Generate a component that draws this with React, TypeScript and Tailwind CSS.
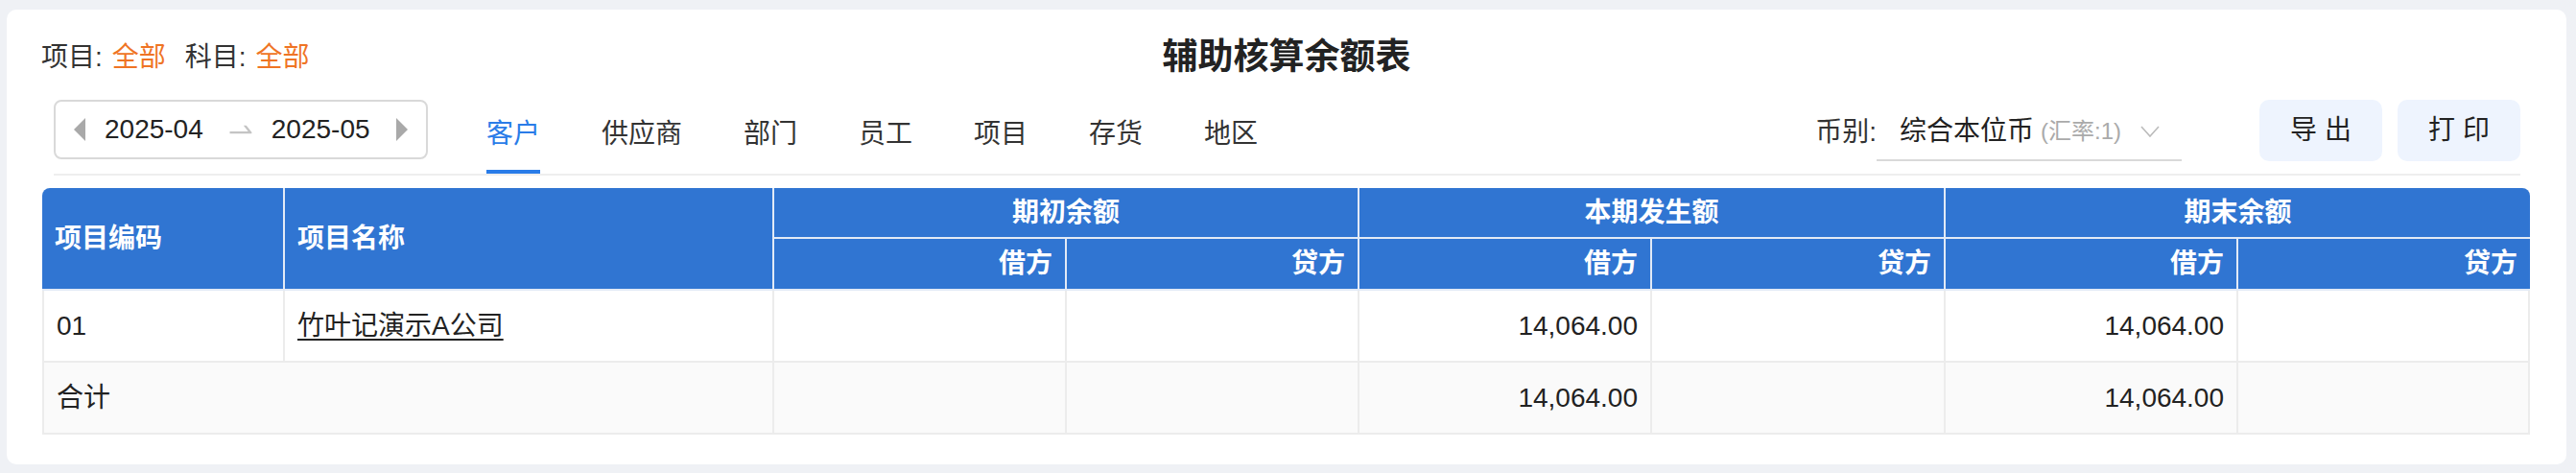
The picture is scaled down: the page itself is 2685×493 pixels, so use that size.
import React from "react";

const font = "font-['Liberation_Sans','Noto_Sans_CJK_SC',sans-serif]";

const tabs = ["客户", "供应商", "部门", "员工", "项目", "存货", "地区"];

// 表体数据
const rows = [
    { code: "01", name: "竹叶记演示A公司", values: ["", "", "14,064.00", "", "14,064.00", ""] },
];
const total = ["", "", "14,064.00", "", "14,064.00", ""];

function DateRange() {
    return (
        <div className="flex items-center h-[62px] w-[390px] border-2 border-[#d9d9d9] rounded-[8px] pl-[19px]">
            <svg width="12" height="24" viewBox="0 0 12 24">
                <polygon points="12,0 0,12 12,24" fill="#a9a9a9" />
            </svg>
            <span className="ml-[20px] text-[28px] text-[#222]">2025-04</span>
            <svg className="ml-[23px]" width="32" height="32" viewBox="0 0 1024 1024">
                <path
                    d="M873.1 596.2l-164-208A32 32 0 00684 376h-64.8c-6.7 0-10.4 7.7-6.3 13l144.3 183H152c-4.4 0-8 3.6-8 8v60c0 4.4 3.6 8 8 8h695.9c26.8 0 41.7-30.8 25.2-51.8z"
                    fill="#c4c4c4"
                />
            </svg>
            <span className="ml-[16px] text-[28px] text-[#222]">2025-05</span>
            <svg className="ml-[27px]" width="12" height="24" viewBox="0 0 12 24">
                <polygon points="0,0 12,12 0,24" fill="#a9a9a9" />
            </svg>
        </div>
    );
}

export default function App() {
    return (
        <div className={`${font} h-[493px] w-full bg-[#eff1f5] pl-[7px] pr-[10px] pt-[10px]`}>
            <div className="h-[474px] bg-white rounded-[10px] flex flex-col">
                {/* 标题行 */}
                <div className="grid grid-cols-[1fr_auto_1fr] items-center h-[60px] mt-[20px]">
                    <div className="flex items-center pl-[36px] text-[28px] text-[#333]">
                        <span>项目:</span>
                        <span className="ml-[10px] text-[#ef7424]">全部</span>
                        <span className="ml-[20px]">科目:</span>
                        <span className="ml-[10px] text-[#ef7424]">全部</span>
                    </div>
                    <h1 className="text-[37px] font-bold text-[#222]">辅助核算余额表</h1>
                    <div />
                </div>

                {/* 工具栏 */}
                <div className="flex items-start h-[79px] mt-[14px] ml-[49px] mr-[48px] border-b-2 border-[#eeeeee]">
                    <DateRange />
                    <div className="flex h-full ml-[29px]">
                        {tabs.map((tab, i) => (
                            <div key={tab} className="h-full px-[32px]">
                                <div
                                    className={`flex items-center h-full pb-[2px] text-[28px] border-b-4 ${
                                        i === 0 ? "text-[#2a7ce8] border-[#2a7ce8]" : "text-[#333] border-transparent"
                                    }`}
                                >
                                    {tab}
                                </div>
                            </div>
                        ))}
                    </div>
                    <div className="ml-auto flex items-center h-[64px]">
                        <span className="text-[28px] text-[#333] pt-[4px]">币别:</span>
                        <div className="flex items-center h-[64px] w-[318px] pt-[4px] pl-[24px] pr-[23px] border-b-2 border-[#d9d9d9]">
                            <span className="text-[28px] text-[#222]">综合本位币</span>
                            <span className="ml-[7px] text-[24px] text-[#aaaaaa]">(汇率:1)</span>
                            <svg className="ml-auto" width="20" height="12" viewBox="0 0 20 12">
                                <polyline points="1,1 10,11 19,1" fill="none" stroke="#bbbbbb" strokeWidth="1.6" />
                            </svg>
                        </div>
                        <button className="ml-[81px] h-[64px] w-[128px] rounded-[10px] bg-[#eef4fe] text-[28px] text-[#222]">
                            导 出
                        </button>
                        <button className="ml-[16px] h-[64px] w-[128px] rounded-[10px] bg-[#eef4fe] text-[28px] text-[#222]">
                            打 印
                        </button>
                    </div>
                </div>

                {/* 表格 */}
                <div className="mt-[13px] ml-[37px] mr-[38px] rounded-t-[8px] overflow-hidden">
                    <table className="w-full table-fixed border-separate border-spacing-0 text-[28px]">
                        <colgroup>
                            <col className="w-[253px]" />
                            <col className="w-[510px]" />
                            <col className="w-[305px]" />
                            <col className="w-[305px]" />
                            <col className="w-[305px]" />
                            <col className="w-[306px]" />
                            <col className="w-[305px]" />
                            <col className="w-[304px]" />
                        </colgroup>
                        <thead className="bg-[#3075d2] text-white font-bold">
                            <tr className="h-[53px]">
                                <th rowSpan={2} className="px-[13px] text-left border-r-2 border-b-2 border-[#e2eaf6]">项目编码</th>
                                <th rowSpan={2} className="px-[13px] text-left border-r-2 border-b-2 border-[#e2eaf6]">项目名称</th>
                                <th colSpan={2} className="text-center border-r-2 border-b-2 border-[#e2eaf6]">期初余额</th>
                                <th colSpan={2} className="text-center border-r-2 border-b-2 border-[#e2eaf6]">本期发生额</th>
                                <th colSpan={2} className="text-center border-b-2 border-[#e2eaf6]">期末余额</th>
                            </tr>
                            <tr className="h-[54px]">
                                {["借方", "贷方", "借方", "贷方", "借方", "贷方"].map((label, i) => (
                                    <th
                                        key={i}
                                        className={`px-[13px] text-right border-b-2 border-[#e2eaf6] ${i < 5 ? "border-r-2" : ""}`}
                                    >
                                        {label}
                                    </th>
                                ))}
                            </tr>
                        </thead>
                        <tbody className="text-[#222]">
                            {rows.map((row) => (
                                <tr key={row.code} className="h-[75px] bg-white">
                                    <td className="px-[13px] border-l-2 border-r-2 border-b-2 border-[#ececec]">{row.code}</td>
                                    <td className="px-[13px] border-r-2 border-b-2 border-[#ececec]">
                                        <span className="underline underline-offset-[4px]">{row.name}</span>
                                    </td>
                                    {row.values.map((v, i) => (
                                        <td key={i} className="px-[13px] text-right border-r-2 border-b-2 border-[#ececec]">
                                            {v}
                                        </td>
                                    ))}
                                </tr>
                            ))}
                            <tr className="h-[75px] bg-[#fafafa]">
                                <td colSpan={2} className="px-[13px] border-l-2 border-r-2 border-b-2 border-[#ececec]">合计</td>
                                {total.map((v, i) => (
                                    <td key={i} className="px-[13px] text-right border-r-2 border-b-2 border-[#ececec]">
                                        {v}
                                    </td>
                                ))}
                            </tr>
                        </tbody>
                    </table>
                </div>
            </div>
        </div>
    );
}
